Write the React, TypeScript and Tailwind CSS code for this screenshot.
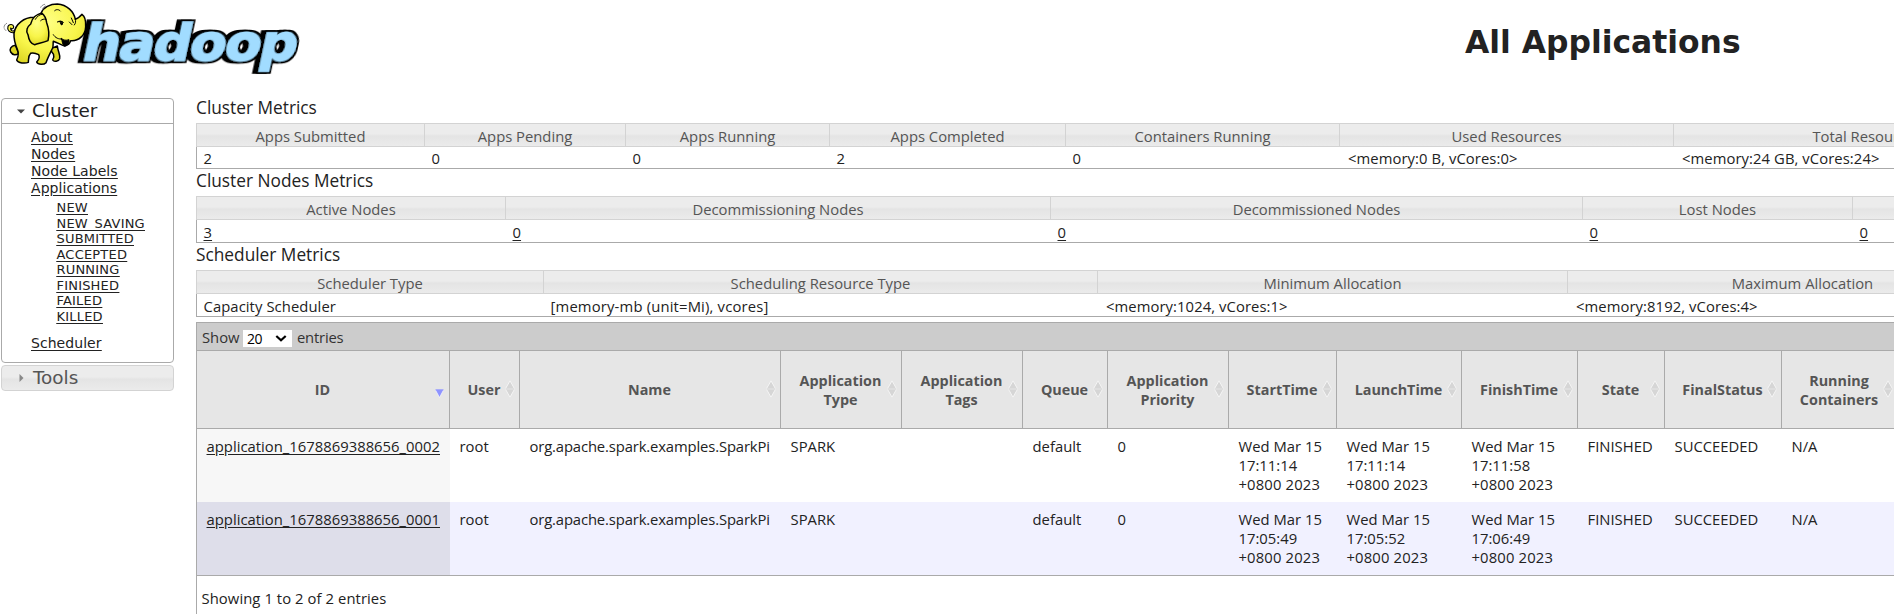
import React from "react";

type Metric = { label: string; value: string; width: string; link?: boolean };

const clusterMetrics: Metric[] = [
  { label: "Apps Submitted", value: "2", width: "w-[228px]" },
  { label: "Apps Pending", value: "0", width: "w-[201px]" },
  { label: "Apps Running", value: "0", width: "w-[204px]" },
  { label: "Apps Completed", value: "2", width: "w-[236px]" },
  { label: "Containers Running", value: "0", width: "w-[274px]" },
  { label: "Used Resources", value: "<memory:0 B, vCores:0>", width: "w-[334px]" },
  { label: "Total Resources", value: "<memory:24 GB, vCores:24>", width: "w-[387px]" },
];

const nodeMetrics: Metric[] = [
  { label: "Active Nodes", value: "3", width: "w-[309px]", link: true },
  { label: "Decommissioning Nodes", value: "0", width: "w-[545px]", link: true },
  { label: "Decommissioned Nodes", value: "0", width: "w-[532px]", link: true },
  { label: "Lost Nodes", value: "0", width: "w-[270px]", link: true },
  { label: "", value: "0", width: "w-[400px]", link: true },
];

const schedulerMetrics: Metric[] = [
  { label: "Scheduler Type", value: "Capacity Scheduler", width: "w-[347px]" },
  { label: "Scheduling Resource Type", value: "[memory-mb (unit=Mi), vcores]", width: "w-[554px]" },
  { label: "Minimum Allocation", value: "<memory:1024, vCores:1>", width: "w-[470px]" },
  { label: "Maximum Allocation", value: "<memory:8192, vCores:4>", width: "w-[470px]" },
];

const columns = [
  { label: ["ID"], width: "w-[253px]" },
  { label: ["User"], width: "w-[70px]" },
  { label: ["Name"], width: "w-[261px]" },
  { label: ["Application", "Type"], width: "w-[121px]" },
  { label: ["Application", "Tags"], width: "w-[121px]" },
  { label: ["Queue"], width: "w-[85px]" },
  { label: ["Application", "Priority"], width: "w-[121px]" },
  { label: ["StartTime"], width: "w-[108px]" },
  { label: ["LaunchTime"], width: "w-[125px]" },
  { label: ["FinishTime"], width: "w-[116px]" },
  { label: ["State"], width: "w-[87px]" },
  { label: ["FinalStatus"], width: "w-[117px]" },
  { label: ["Running", "Containers"], width: "w-[116px]" },
];

const rows: string[][][] = [
  [
    ["application_1678869388656_0002"], ["root"], ["org.apache.spark.examples.SparkPi"], ["SPARK"], [""], ["default"], ["0"],
    ["Wed Mar 15", "17:11:14", "+0800 2023"],
    ["Wed Mar 15", "17:11:14", "+0800 2023"],
    ["Wed Mar 15", "17:11:58", "+0800 2023"],
    ["FINISHED"], ["SUCCEEDED"], ["N/A"],
  ],
  [
    ["application_1678869388656_0001"], ["root"], ["org.apache.spark.examples.SparkPi"], ["SPARK"], [""], ["default"], ["0"],
    ["Wed Mar 15", "17:05:49", "+0800 2023"],
    ["Wed Mar 15", "17:05:52", "+0800 2023"],
    ["Wed Mar 15", "17:06:49", "+0800 2023"],
    ["FINISHED"], ["SUCCEEDED"], ["N/A"],
  ],
];

const appStates = ["NEW", "NEW_SAVING", "SUBMITTED", "ACCEPTED", "RUNNING", "FINISHED", "FAILED", "KILLED"];

function Logo() {
  return (
    <svg width="310" height="80" viewBox="0 0 930 240" className="shrink-0">
      <defs>
        <radialGradient id="skin" cx="0.45" cy="0.3" r="0.75">
          <stop offset="0" stopColor="#ffff86" />
          <stop offset="0.6" stopColor="#f8f54a" />
          <stop offset="1" stopColor="#dcd522" />
        </radialGradient>
        <filter id="extrude" x="-10%" y="-20%" width="120%" height="140%">
          <feMorphology in="SourceAlpha" operator="dilate" radius="7" result="fat" />
          <feOffset in="fat" dx="-11" dy="1" result="back" />
          <feMerge>
            <feMergeNode in="back" />
            <feMergeNode in="fat" />
            <feMergeNode in="SourceGraphic" />
          </feMerge>
        </filter>
      </defs>
      <text
        x="0"
        y="0"
        transform="translate(241 181) skewX(-12)"
        textLength="640"
        lengthAdjust="spacingAndGlyphs"
        fontFamily="'DejaVu Sans', Verdana, sans-serif"
        fontSize="150"
        fontWeight="700"
        letterSpacing="-4"
        fill="#a1dcff"
        stroke="#a1dcff"
        strokeWidth="4"
        filter="url(#extrude)"
      >
        hadoop
      </text>
      <g stroke="#000" strokeWidth="4.5" strokeLinecap="round" strokeLinejoin="round">
        <path d="M42 98 C30 100 20 90 24 79 C28 71 40 72 41 80 C41 87 34 88 32 84 C31 92 38 96 46 90" fill="#f8f54a" strokeWidth="3.5" />
        <path d="M148 148 C160 158 166 166 158 180 C162 187 176 184 179 176 C182 166 174 156 172 138 Z" fill="#dcd522" />
        <path d="M46 136 C32 138 28 148 32 156 C38 166 48 166 56 160 Z" fill="#dcd522" />
        <path
          d="M102 52 C72 52 46 72 42 100 C41 118 46 134 52 148 C58 162 54 172 50 180 C54 190 76 191 85 187 C86 176 84 168 92 160 C100 158 108 160 116 164 C120 172 116 180 110 186 C114 195 132 195 138 188 C142 176 150 160 156 148 C162 140 158 130 160 124 C172 128 182 134 194 138 C204 136 210 130 212 122 C236 124 256 106 257 80 C258 62 254 48 246 43 C240 50 234 56 226 58 C222 36 202 14 172 12 C150 12 130 22 124 38 C118 44 110 50 102 52 Z"
          fill="url(#skin)"
        />
        <path d="M184 116 C188 124 186 134 194 138 C204 138 208 128 207 119 C198 122 191 121 184 116 Z" fill="#000" strokeWidth="3" />
        <path
          d="M126 40 C110 42 96 54 92 72 C82 80 76 94 84 104 C86 118 92 132 104 134 C116 130 130 128 144 122 C148 106 146 84 140 68 C138 54 134 46 126 40 Z"
          fill="url(#skin)"
        />
        <path d="M128 42 C118 44 110 50 106 58 M138 58 C132 56 126 58 122 62" fill="none" strokeWidth="3" />
        <path d="M160 104 C166 114 176 118 186 117" fill="none" strokeWidth="3" />
        <path d="M164 32 C169 27 177 28 181 33 M226 58 C228 64 227 70 223 75 M214 54 L220 68 M208 66 L216 74" fill="none" strokeWidth="3" />
        <path d="M172 66 C178 62 184 62 190 67 M182 65 C180 70 182 74 186 75 L188 69 Z" fill="#000" strokeWidth="3" />
        <path d="M122 22 C124 18 128 14 134 13 M128 26 C130 22 132 20 136 18 M12 82 C12 76 16 72 20 70 M18 92 C16 90 14 88 13 86" fill="none" strokeWidth="1.8" stroke="#444" />
      </g>
    </svg>
  );
}

function MetricsTable({ title, metrics, tall }: { title: string; metrics: Metric[]; tall?: boolean }) {
  return (
    <section>
      <h2 className="h-[27px] text-[17.3px] leading-[23px] text-[#222]">{title}</h2>
      <div className="flex h-6 border-y border-[#d3d3d3] bg-[linear-gradient(to_bottom,#ececec_0,#ececec_45%,#e4e4e4_55%,#ebebeb_100%)]">
        {metrics.map((m, i) => (
          <div key={i} className={`${m.width} h-[22px] shrink-0 border-l border-[#d3d3d3] text-center text-[14.8px] leading-6 text-[#555]`}>
            {m.label}
          </div>
        ))}
      </div>
      <div className={`flex border-b border-l border-[#aaa] text-[14.8px] tracking-[0.08px] text-[#222] ${tall ? "h-[23px] leading-6" : "h-[22px] leading-[22px]"}`}>
        {metrics.map((m, i) => (
          <div
            key={i}
            className={`${m.width} shrink-0 ${m.value.startsWith("<") ? "pl-2" : "pl-[6.5px]"} ${m.value.startsWith("[") ? "tracking-[0.17px]" : ""}`}
          >
            {m.link ? <a className="underline underline-offset-2">{m.value}</a> : m.value}
          </div>
        ))}
      </div>
    </section>
  );
}

function SortIcon({ active }: { active: boolean }) {
  if (active) {
    return (
      <svg width="9" height="9" viewBox="0 0 9 9" className="absolute top-[38px] right-[5px]">
        <path d="M0.5 1 L4.5 8.5 L8.5 1" fill="#8f94ff" stroke="#fff" strokeWidth="0.6" />
        <path d="M0.5 0.8 H8.5" stroke="#8f94ff" />
      </svg>
    );
  }
  return (
    <svg width="10" height="18" viewBox="0 0 10 18" className="absolute top-[29px] right-[4px]">
      <path d="M5 0.8 L9.3 8.4 H0.7 Z M5 17.2 L9.3 9.6 H0.7 Z" fill="#d6d6d6" />
      <path d="M0.7 8.4 L5 0.8 L9.3 8.4 M0.7 9.6 L5 17.2 L9.3 9.6" fill="none" stroke="#f6f6f6" strokeWidth="0.9" />
    </svg>
  );
}

export default function App() {
  return (
    <div className="h-[614px] w-full overflow-hidden bg-white font-['Open_Sans','Noto_Sans',sans-serif] text-[#222]">
      <header className="flex h-[90px]">
        <Logo />
        <h1 className="ml-[1155px] shrink-0 pt-[22px] font-['DejaVu_Sans',Verdana,sans-serif] text-[31.4px] leading-10 font-bold whitespace-nowrap">
          All Applications
        </h1>
      </header>

      <div className="flex">
        <nav className="w-[196px] shrink-0 pt-2 pl-px font-['DejaVu_Sans',Verdana,sans-serif]">
          <div className="h-[265px] w-[173px] rounded-[4px] border border-[#aaa]">
            <div className="flex h-[25px] items-center border-b border-[#aaa] pl-[15px]">
              <svg width="8" height="5" viewBox="0 0 8 5">
                <path d="M0 0.5 H8 L4 4.5 Z" fill="#444" />
              </svg>
              <span className="pl-[7px] text-[18.4px] leading-6">Cluster</span>
            </div>
            <div className="flex flex-col items-start pt-[5px] pl-[29px] text-[14px] leading-[17px] tracking-[0.05px] underline underline-offset-2">
              <a>About</a>
              <a>Nodes</a>
              <a>Node Labels</a>
              <a>Applications</a>
              <div className="mt-[3px] flex flex-col items-start pl-[25.5px] text-[13px] leading-[15.5px] tracking-[0.2px]">
                {appStates.map((s) => (
                  <a key={s} className="underline underline-offset-2">{s}</a>
                ))}
              </div>
              <a className="mt-[11px]">Scheduler</a>
            </div>
          </div>
          <div className="mt-[2px] flex h-[26px] w-[173px] items-center rounded-[4px] border border-[#d3d3d3] bg-[linear-gradient(to_bottom,#ececec_0,#ececec_45%,#e4e4e4_55%,#ebebeb_100%)] pl-[17px] text-[#555]">
            <svg width="5" height="8" viewBox="0 0 5 8">
              <path d="M0.5 0 V8 L4.5 4 Z" fill="#888" />
            </svg>
            <span className="pl-[9px] text-[18.4px] leading-6">Tools</span>
          </div>
        </nav>

        <main className="min-w-0 flex-1 overflow-hidden pt-[6px] whitespace-nowrap">
          <MetricsTable title="Cluster Metrics" metrics={clusterMetrics} />
          <MetricsTable title="Cluster Nodes Metrics" metrics={nodeMetrics} tall />
          <MetricsTable title="Scheduler Metrics" metrics={schedulerMetrics} tall />

          <section className="mt-[5px] h-[300px] border-t border-l border-[#aaa] text-[14.8px]">
            <div className="flex h-[27px] bg-[#ccc] pl-[5px] leading-7 text-[#333]">
              <span className="w-[41px]">Show</span>
              <div className="mt-[7px] flex h-[17px] w-[49px] items-center justify-between bg-white pr-[5px] pl-[4px] text-[14px] leading-[17px] tracking-[-0.4px] text-black">
                20
                <svg width="12" height="7" viewBox="0 0 12 7">
                  <path d="M1.3 1 L6 5.3 L10.7 1" fill="none" stroke="#000" strokeWidth="2.2" />
                </svg>
              </div>
              <span className="pl-[5px] tracking-[-0.2px]">entries</span>
            </div>

            <div className="flex h-[79px] border-y border-[#aaa] bg-[#e6e6e6]">
              {columns.map((c, i) => (
                <div
                  key={i}
                  className={`${c.width} relative flex shrink-0 flex-col items-center justify-center border-r border-[#aaa] pr-px text-[14.35px] leading-[19px] font-bold text-[#555]`}
                >
                  {c.label.map((l) => (
                    <span key={l}>{l}</span>
                  ))}
                  <SortIcon active={i === 0} />
                </div>
              ))}
            </div>

            {rows.map((row, r) => (
              <div key={r} className={`flex h-[73px] ${r === 0 ? "bg-white" : "bg-[#f1f1ff]"}`}>
                {row.map((cell, i) => (
                  <div
                    key={i}
                    className={`${columns[i].width} shrink-0 pt-2 pl-[9.5px] leading-[19px] ${
                      i === 0 ? (r === 0 ? "bg-[#f7f7f7]" : "bg-[#dedeea]") : ""
                    } ${i === 2 ? "tracking-[-0.13px]" : "tracking-[0.02px]"}`}
                  >
                    {cell.map((l, k) => (
                      <div key={k} className={i === 0 ? "underline underline-offset-2" : l.startsWith("+") ? "tracking-[0.15px]" : ""}>
                        {l}
                      </div>
                    ))}
                  </div>
                ))}
              </div>
            ))}

            <div className="border-t border-[#aaa] pt-[11px] pl-[4.5px] leading-[22px] tracking-[0.08px]">Showing 1 to 2 of 2 entries</div>
          </section>
        </main>
      </div>
    </div>
  );
}
